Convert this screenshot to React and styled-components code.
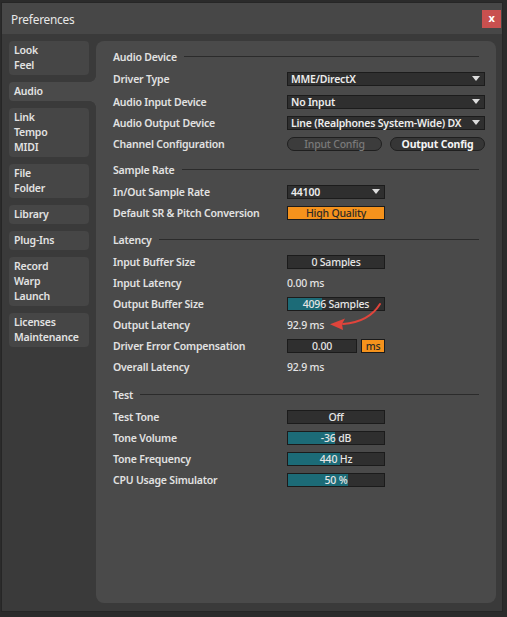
import React from 'react';
import styled, { createGlobalStyle } from 'styled-components';

const GlobalStyle = createGlobalStyle`
  html, body {
    margin: 0;
    padding: 0;
    background: #2a2a2a;
  }
  body {
    font-family: "Noto Sans", "DejaVu Sans", sans-serif;
    -webkit-font-smoothing: antialiased;
  }
`;

const PANEL = '#4a4a4a';
const TEXT = '#e2e2e2';

const Screen = styled.div`
  width: 507px;
  height: 617px;
  box-sizing: border-box;
  padding: 3px 5px 6px 2px;
  background: #2b2b2b;
  overflow: hidden;
`;

const Window = styled.div`
  width: 500px;
  height: 608px;
  display: flex;
  flex-direction: column;
  background: #3a3a3a;
  box-shadow: 0 0 0 1px #262626;
`;

const TitleBar = styled.div`
  height: 31px;
  flex: none;
  display: flex;
  align-items: center;
  justify-content: space-between;
  padding: 0 1px 0 9px;
  background: #474747;
  color: #e8e8e8;
  font-size: 11.8px;
  letter-spacing: -0.2px;
`;

const CloseButton = styled.div`
  width: 19px;
  height: 18px;
  display: flex;
  align-items: center;
  justify-content: center;
  background: #c9504f;
  color: #fff;
  font-weight: 700;
  font-size: 11px;
  line-height: 1;
  padding-bottom: 2px;
  box-sizing: border-box;
`;

const Body = styled.div`
  flex: 1;
  display: flex;
  padding: 7px 6px 8px 0;
`;

const Sidebar = styled.div`
  width: 94px;
  flex: none;
  display: flex;
  flex-direction: column;
  gap: 7px;
  padding-left: 7px;
  box-sizing: border-box;
`;

const Tab = styled.div`
  position: relative;
  width: ${(p) => (p.$active ? '87px' : '80px')};
  box-sizing: border-box;
  padding: 2px 5px;
  background: ${(p) => (p.$active ? PANEL : '#464646')};
  border-radius: ${(p) => (p.$active ? '4px 0 0 4px' : '4px')};
  color: ${TEXT};
  font-weight: 600;
  font-size: 10.5px;
  letter-spacing: -0.2px;
  line-height: 15px;

  ${(p) =>
    p.$active &&
    `
    &::before, &::after {
      content: '';
      position: absolute;
      right: 0;
      width: 6px;
      height: 6px;
    }
    &::before {
      top: -6px;
      background: radial-gradient(circle at 0 0, transparent 5.5px, ${PANEL} 6px);
    }
    &::after {
      bottom: -6px;
      background: radial-gradient(circle at 0 100%, transparent 5.5px, ${PANEL} 6px);
    }
  `}
`;

const Panel = styled.div`
  flex: 1;
  position: relative;
  background: ${PANEL};
  border-radius: 8px;
  padding: 0 11px 0 17px;
  color: ${TEXT};
  font-size: 10.5px;
  letter-spacing: -0.2px;
  font-weight: 600;
`;

const Header = styled.div`
  display: flex;
  align-items: center;
  height: 27px;
  padding-top: 4px;
  margin-top: ${(p) => p.$mt || 0}px;
  box-sizing: border-box;

  &::after {
    content: '';
    flex: 1;
    height: 1px;
    background: #2b2b2b;
    margin: 0 6px 0 7px;
  }
`;

const Row = styled.div`
  display: flex;
  align-items: center;
  height: 21px;
  margin-top: ${(p) => p.$mt || 0}px;
`;

const Label = styled.div`
  width: 174px;
  flex: none;
`;

const Controls = styled.div`
  display: flex;
  gap: ${(p) => p.$gap || 4}px;
`;

const Dropdown = styled.div`
  width: ${(p) => p.$w}px;
  height: 14px;
  box-sizing: border-box;
  display: flex;
  align-items: center;
  justify-content: space-between;
  padding: 0 4px 0 3px;
  background: #2f2f2f;
  border: 1px solid #1c1c1c;
  color: #ececec;
  font-weight: 600;
`;

const Caret = styled.span`
  width: 0;
  height: 0;
  border-left: 4px solid transparent;
  border-right: 4px solid transparent;
  border-top: 5px solid #dcdcdc;
`;

const PillButton = styled.div`
  width: 95px;
  height: 14px;
  box-sizing: border-box;
  display: flex;
  align-items: center;
  justify-content: center;
  border-radius: 7px;
  border: 1px solid #1f1f1f;
  background: ${(p) => (p.$disabled ? '#3c3c3c' : '#363636')};
  color: ${(p) => (p.$disabled ? '#7a7a7a' : '#f4f4f4')};
  font-weight: ${(p) => (p.$disabled ? 500 : 700)};
`;

const ValueBox = styled.div`
  position: relative;
  width: ${(p) => p.$w || 98}px;
  height: 14px;
  box-sizing: border-box;
  display: flex;
  align-items: center;
  justify-content: center;
  background: ${(p) => (p.$orange ? '#f5921c' : '#2f2f2f')};
  border: 1px solid #1b1b1b;
  color: ${(p) => (p.$orange ? '#2c2a26' : '#e6e6e6')};
  font-weight: 500;
  overflow: hidden;
`;

const Fill = styled.div`
  position: absolute;
  left: 0;
  top: 0;
  bottom: 0;
  background: #1c6b77;
`;

const ValueText = styled.span`
  position: relative;
`;

const PlainValue = styled.div`
  color: #e4e4e4;
  font-weight: 500;
`;

const Annotation = styled.svg`
  position: absolute;
  left: 229px;
  top: 257px;
  overflow: visible;
`;

const tabs = [
  ['Look', 'Feel'],
  ['Audio'],
  ['Link', 'Tempo', 'MIDI'],
  ['File', 'Folder'],
  ['Library'],
  ['Plug-Ins'],
  ['Record', 'Warp', 'Launch'],
  ['Licenses', 'Maintenance'],
];

const Value = ({ children, fill, w, orange }) => (
  <ValueBox $w={w} $orange={orange}>
    {fill != null && <Fill style={{ width: `${fill}%` }} />}
    <ValueText>{children}</ValueText>
  </ValueBox>
);

const App = () => (
  <>
    <GlobalStyle />
    <Screen>
      <Window>
        <TitleBar>
          <span>Preferences</span>
          <CloseButton>x</CloseButton>
        </TitleBar>
        <Body>
          <Sidebar>
            {tabs.map((lines) => (
              <Tab key={lines[0]} $active={lines[0] === 'Audio'}>
                {lines.map((l) => (
                  <div key={l}>{l}</div>
                ))}
              </Tab>
            ))}
          </Sidebar>
          <Panel>
            <Header>Audio Device</Header>
            <Row>
              <Label>Driver Type</Label>
              <Dropdown $w={198}>
                MME/DirectX
                <Caret />
              </Dropdown>
            </Row>
            <Row $mt={2}>
              <Label>Audio Input Device</Label>
              <Dropdown $w={198}>
                No Input
                <Caret />
              </Dropdown>
            </Row>
            <Row>
              <Label>Audio Output Device</Label>
              <Dropdown $w={198}>
                Line (Realphones System-Wide) DX
                <Caret />
              </Dropdown>
            </Row>
            <Row>
              <Label>Channel Configuration</Label>
              <Controls $gap={8}>
                <PillButton $disabled>Input Config</PillButton>
                <PillButton>Output Config</PillButton>
              </Controls>
            </Row>

            <Header>Sample Rate</Header>
            <Row>
              <Label>In/Out Sample Rate</Label>
              <Dropdown $w={98}>
                44100
                <Caret />
              </Dropdown>
            </Row>
            <Row>
              <Label>Default SR &amp; Pitch Conversion</Label>
              <Value orange>High Quality</Value>
            </Row>

            <Header $mt={1}>Latency</Header>
            <Row>
              <Label>Input Buffer Size</Label>
              <Value>0 Samples</Value>
            </Row>
            <Row>
              <Label>Input Latency</Label>
              <PlainValue>0.00 ms</PlainValue>
            </Row>
            <Row>
              <Label>Output Buffer Size</Label>
              <Value fill={35}>4096 Samples</Value>
            </Row>
            <Row>
              <Label>Output Latency</Label>
              <PlainValue>92.9 ms</PlainValue>
            </Row>
            <Row>
              <Label>Driver Error Compensation</Label>
              <Controls>
                <Value w={70}>0.00</Value>
                <Value w={24} orange>
                  ms
                </Value>
              </Controls>
            </Row>
            <Row>
              <Label>Overall Latency</Label>
              <PlainValue>92.9 ms</PlainValue>
            </Row>

            <Header $mt={2}>Test</Header>
            <Row>
              <Label>Test Tone</Label>
              <Value>Off</Value>
            </Row>
            <Row>
              <Label>Tone Volume</Label>
              <Value fill={49}>-36 dB</Value>
            </Row>
            <Row>
              <Label>Tone Frequency</Label>
              <Value fill={54}>440 Hz</Value>
            </Row>
            <Row>
              <Label>CPU Usage Simulator</Label>
              <Value fill={62}>50 %</Value>
            </Row>

            <Annotation width="60" height="38" viewBox="0 0 60 38">
              <path
                d="M55 6 Q44 24 18 26"
                fill="none"
                stroke="#e0443b"
                strokeWidth="2"
                strokeLinecap="round"
              />
              <path d="M5 26.3 L20 20.5 L17 26 L18 32 Z" fill="#e0443b" />
            </Annotation>
          </Panel>
        </Body>
      </Window>
    </Screen>
  </>
);

export default App;
